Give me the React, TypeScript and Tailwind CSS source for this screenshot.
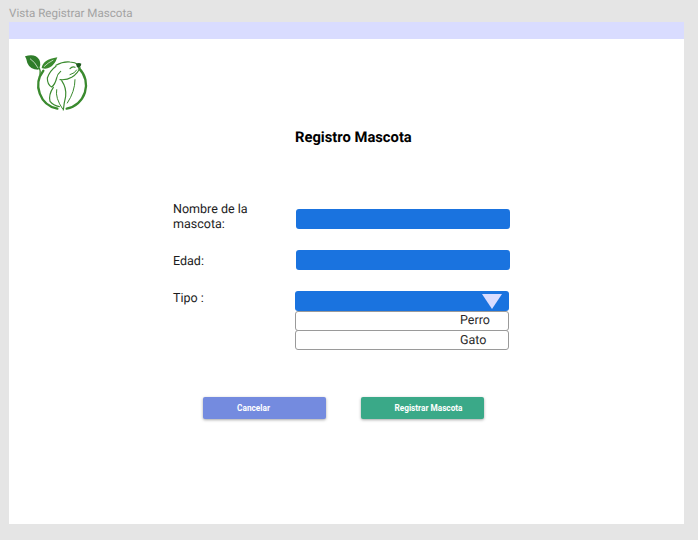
function Logo() {
  return (
    <svg width="72" height="68" viewBox="0 0 216 204" fill="none" className="block">
      <g stroke="#3a8a2e" strokeLinecap="round" strokeLinejoin="round">
        <path d="M70 68 A71.5 71.5 0 0 0 112 182" strokeWidth="7" />
        <path d="M140 182 A71.5 71.5 0 0 0 178 62" strokeWidth="7" />
        <path d="M58 60 Q62 68 60 80" strokeWidth="4" />
        <path d="M108 52 Q128 40 150 42 Q165 42 175 50" strokeWidth="3.5" />
        <path d="M108 55 Q90 68 82 90 Q82 110 95 117 Q105 110 110 90 Q112 78 122 70" strokeWidth="3.5" />
        <path d="M180 58 Q175 75 155 88 Q140 97 120 95" strokeWidth="3.5" />
        <path d="M150 80 Q165 76 170 66" strokeWidth="3" />
        <path d="M150 62 Q157 54 165 58" strokeWidth="3.5" />
        <path d="M100 118 Q85 140 90 160 Q100 172 118 176" strokeWidth="3.5" />
        <path d="M125 98 Q140 120 137 145 Q132 165 130 186" strokeWidth="3.5" />
        <path d="M110 125 Q105 150 128 183" strokeWidth="3" />
        <path d="M165 95 Q165 130 142 165" strokeWidth="3" />
      </g>
      <path d="M168 48 Q176 42 184 47 Q184 56 176 60 Q169 58 168 48 Z" fill="#1f5a1f" />
      <path d="M15 25 Q45 15 58 35 Q65 50 55 65 Q30 65 22 45 Q20 33 15 25 Z" fill="#2f7d2a" />
      <path d="M65 60 Q68 35 112 28 Q105 50 90 58 Q78 65 65 60 Z" fill="#3a8a2e" />
      <path d="M30 32 Q45 42 54 60 M72 56 Q84 44 100 36" stroke="#ffffff" strokeWidth="2" />
    </svg>
  );
}

function Option({ label }: { label: string }) {
  return (
    <div className="h-5 w-[214px] -mt-[0.5px] rounded-[3px] border border-[#9a9a9a] bg-white flex items-center pl-[164px] pt-[2px] text-[12.5px] text-[#2a2a2a]">
      {label}
    </div>
  );
}

export default function App() {
  return (
    <div className="w-[698px] h-[540px] bg-[#e5e5e5] overflow-hidden pl-[9px] font-['Roboto',sans-serif] [text-rendering:geometricPrecision]">
      <div className="h-[22px] flex items-center text-[11.6px] text-[#a3a3a3] pt-[6px]">Vista Registrar Mascota</div>
      <div className="w-[675px] h-[502px] bg-white">
        <div className="h-[17px] bg-[#d9dcff]" />
        <div className="pl-[11px] pt-[9px] h-[76px]">
          <Logo />
        </div>
        <h1 className="h-[44px] pl-[286px] text-[14.75px] leading-[44px] font-bold text-black">Registro Mascota</h1>
        <div className="pt-[43px] pl-[164px] flex flex-col">
          <div className="flex h-[30px]">
            <label className="w-[123px] shrink-0 text-[12.5px] leading-[15px] text-[#1c1c1c] pr-4">Nombre de la mascota:</label>
            <div className="w-[214px] h-5 mt-[7px] rounded-[3px] bg-[#1a73df]" />
          </div>
          <div className="flex mt-[18px]">
            <label className="w-[123px] shrink-0 pt-[4px] text-[12.5px] leading-[15px] text-[#1c1c1c]">Edad:</label>
            <div className="w-[214px] h-5 rounded-[3px] bg-[#1a73df]" />
          </div>
          <div className="flex mt-[21px]">
            <label className="w-[122px] shrink-0 text-[12.5px] leading-[15px] text-[#1c1c1c]">Tipo :</label>
            <div className="flex flex-col">
              <div className="h-5 w-[214px] rounded-[3px] bg-[#1a73df] flex justify-end items-center pr-[7px]">
                <svg width="20" height="15" viewBox="0 0 20 15" className="mt-[1px]">
                  <polygon points="0,0 20,0 10,15" fill="#d9dcff" />
                </svg>
              </div>
              <Option label="Perro" />
              <Option label="Gato" />
            </div>
          </div>
          <div className="flex mt-[47px] pl-[30px] gap-[35px]">
            <button className="w-[123px] h-[22px] rounded-[2px] bg-[#748bdf] text-white text-[8.25px] font-bold shadow-[0_1px_3px_rgba(0,0,0,0.35)] pr-[22px]">Cancelar</button>
            <button className="w-[123px] h-[22px] rounded-[2px] bg-[#3aa988] text-white text-[8.25px] font-bold shadow-[0_1px_3px_rgba(0,0,0,0.35)] pl-[12px]">Registrar Mascota</button>
          </div>
        </div>
      </div>
    </div>
  );
}
